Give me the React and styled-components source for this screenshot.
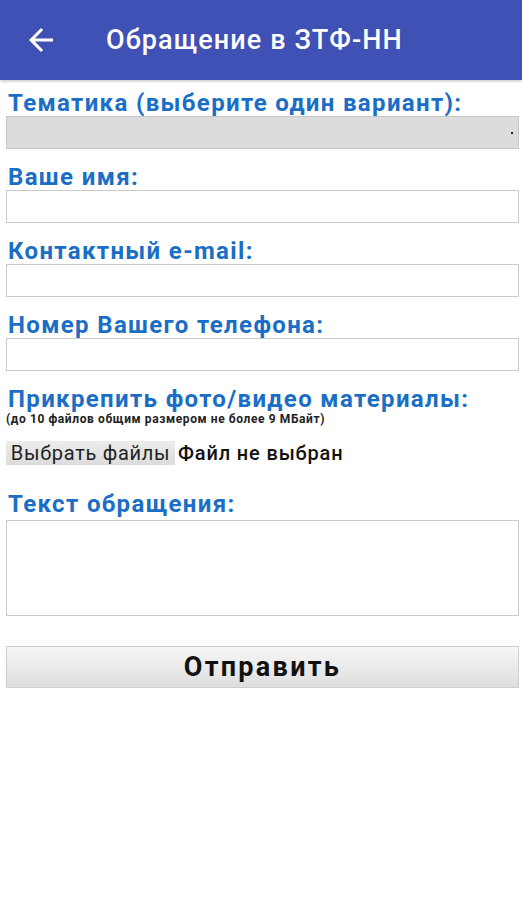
import styled, { createGlobalStyle } from "styled-components";

const GlobalStyle = createGlobalStyle`
  html, body {
    margin: 0;
    padding: 0;
    background: #fff;
    font-family: Roboto, "Noto Sans", sans-serif;
  }
`;

const Page = styled.div`
  width: 522px;
  min-height: 900px;
  background: #fff;
`;

const AppBar = styled.header`
  height: 80px;
  background: #3f51b5;
  display: flex;
  align-items: center;
  box-shadow: 0 1px 3px rgba(0, 0, 0, 0.25);
`;

const BackButton = styled.button`
  width: 36px;
  height: 36px;
  margin-left: 23px;
  margin-right: 47px;
  padding: 0;
  border: none;
  background: transparent;
  display: flex;
  align-items: center;
  justify-content: center;
`;

const Title = styled.h1`
  margin: 0;
  color: #fff;
  font-size: 27px;
  font-weight: 500;
  letter-spacing: 1.1px;
`;

const Form = styled.form`
  padding: 0 3px 0 6px;
  display: flex;
  flex-direction: column;
`;

const Field = styled.div`
  display: flex;
  flex-direction: column;
  margin-top: ${(p) => p.$top ?? 16}px;
`;

const Label = styled.label`
  color: #1a6ec5;
  font-size: 24px;
  font-weight: 700;
  line-height: 25px;
  letter-spacing: 1.35px;
  padding-left: 2px;
  white-space: nowrap;
  margin-bottom: ${(p) => p.$gap ?? 0}px;
`;

const Select = styled.div`
  height: 33px;
  box-sizing: border-box;
  background: #dcdcdc;
  border: 1px solid #c6c6c6;
  display: flex;
  align-items: center;
  justify-content: flex-end;
  padding-right: 5px;
`;

const Dot = styled.span`
  width: 2px;
  height: 2px;
  background: #222;
`;

const TextInput = styled.input`
  height: 33px;
  box-sizing: border-box;
  margin: 0;
  border: 1px solid #cbcbcb;
  background: #fff;
  outline: none;
`;

const Hint = styled.div`
  font-size: 12px;
  font-weight: 700;
  line-height: 14px;
  letter-spacing: 0.6px;
  color: #222;
  white-space: nowrap;
`;

const FileRow = styled.div`
  display: flex;
  align-items: center;
  margin-top: 15px;
`;

const FileButton = styled.button`
  height: 24px;
  width: 169px;
  padding: 0 2px;
  box-sizing: border-box;
  border: none;
  background: linear-gradient(#ececec, #dcdcdc);
  color: #222;
  font-family: Roboto, sans-serif;
  font-size: 20px;
  line-height: 24px;
  letter-spacing: 0.7px;
  white-space: nowrap;
`;

const FileStatus = styled.span`
  margin-left: 3px;
  font-size: 20px;
  font-weight: 500;
  letter-spacing: 0.85px;
  color: #111;
`;

const TextArea = styled.textarea`
  height: 96px;
  box-sizing: border-box;
  margin: 0;
  border: 1px solid #cbcbcb;
  resize: none;
  outline: none;
`;

const Submit = styled.button`
  margin-top: 30px;
  height: 42px;
  border: 1px solid #cdcdcd;
  background: linear-gradient(#f6f6f6, #dedede);
  font-family: Roboto, sans-serif;
  font-size: 27px;
  font-weight: 700;
  color: #111;
  letter-spacing: 2.3px;
`;

const ArrowBack = () => (
  <svg width="36" height="36" viewBox="0 0 24 24" fill="#fff">
    <path d="M20 11H7.83l5.59-5.59L12 4l-8 8 8 8 1.41-1.41L7.83 13H20v-2z" />
  </svg>
);

export default function App() {
  return (
    <Page>
      <GlobalStyle />
      <AppBar>
        <BackButton type="button">
          <ArrowBack />
        </BackButton>
        <Title>Обращение в ЗТФ-НН</Title>
      </AppBar>
      <Form onSubmit={(e) => e.preventDefault()}>
        <Field $top={11}>
          <Label>Тематика (выберите один вариант):</Label>
          <Select>
            <Dot />
          </Select>
        </Field>
        <Field>
          <Label>Ваше имя:</Label>
          <TextInput type="text" />
        </Field>
        <Field>
          <Label>Контактный e-mail:</Label>
          <TextInput type="email" />
        </Field>
        <Field>
          <Label>Номер Вашего телефона:</Label>
          <TextInput type="tel" />
        </Field>
        <Field>
          <Label>Прикрепить фото/видео материалы:</Label>
          <Hint>(до 10 файлов общим размером не более 9 МБайт)</Hint>
          <FileRow>
            <FileButton type="button">Выбрать файлы</FileButton>
            <FileStatus>Файл не выбран</FileStatus>
          </FileRow>
        </Field>
        <Field $top={27}>
          <Label $gap={3}>Текст обращения:</Label>
          <TextArea />
        </Field>
        <Submit type="submit">Отправить</Submit>
      </Form>
    </Page>
  );
}
